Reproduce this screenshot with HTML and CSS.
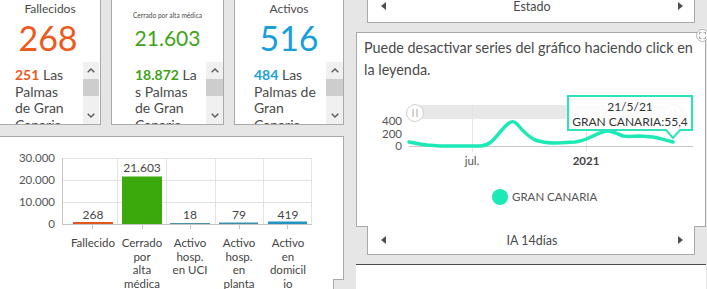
FILE: index.html
```html
<!DOCTYPE html>
<html lang="es">
<head>
<meta charset="utf-8">
<title>Panel</title>
<link rel="stylesheet" href="styles.css">
</head>
<body>
<div class="page">
  <div class="left">
    <div class="cards">
      <div class="card c1">
        <div class="card-title">Fallecidos</div>
        <div class="card-value orange">268</div>
        <div class="card-list">
          <div class="list-text"><b class="orange">251</b> Las<br>Palmas<br>de Gran<br>Canaria</div>
          <div class="sb">
            <div class="sb-btn"><svg width="8" height="5" viewBox="0 0 8 5"><polyline points="0.7,4.3 4,1 7.3,4.3" /></svg></div>
            <div class="sb-thumb"></div>
            <div class="sb-track"></div>
            <div class="sb-btn"><svg width="8" height="5" viewBox="0 0 8 5"><polyline points="0.7,0.7 4,4 7.3,0.7" /></svg></div>
          </div>
        </div>
      </div>
      <div class="card c2">
        <div class="card-title tiny">Cerrado por alta médica</div>
        <div class="card-value green small">21.603</div>
        <div class="card-list">
          <div class="list-text"><b class="green">18.872</b> La<br>s Palmas<br>de Gran<br>Canaria</div>
          <div class="sb">
            <div class="sb-btn"><svg width="8" height="5" viewBox="0 0 8 5"><polyline points="0.7,4.3 4,1 7.3,4.3" /></svg></div>
            <div class="sb-thumb"></div>
            <div class="sb-track"></div>
            <div class="sb-btn"><svg width="8" height="5" viewBox="0 0 8 5"><polyline points="0.7,0.7 4,4 7.3,0.7" /></svg></div>
          </div>
        </div>
      </div>
      <div class="card c3">
        <div class="card-title">Activos</div>
        <div class="card-value blue">516</div>
        <div class="card-list">
          <div class="list-text"><b class="blue">484</b> Las<br>Palmas de<br>Gran<br>Canaria</div>
          <div class="sb">
            <div class="sb-btn"><svg width="8" height="5" viewBox="0 0 8 5"><polyline points="0.7,4.3 4,1 7.3,4.3" /></svg></div>
            <div class="sb-thumb"></div>
            <div class="sb-track"></div>
            <div class="sb-btn"><svg width="8" height="5" viewBox="0 0 8 5"><polyline points="0.7,0.7 4,4 7.3,0.7" /></svg></div>
          </div>
        </div>
      </div>
    </div>

    <div class="panel bars-panel">
      <div class="panel-body bars-body">
        <svg class="bar-chart" width="344" height="160" viewBox="0 0 344 160">
          <g class="grid">
            <line x1="62" y1="21.5" x2="312" y2="21.5"/>
            <line x1="62" y1="43.5" x2="312" y2="43.5"/>
            <line x1="62" y1="65.5" x2="312" y2="65.5"/>
            <line x1="117.5" y1="21" x2="117.5" y2="87"/>
            <line x1="166.5" y1="21" x2="166.5" y2="87"/>
            <line x1="215.5" y1="21" x2="215.5" y2="87"/>
            <line x1="263.5" y1="21" x2="263.5" y2="87"/>
            <line x1="311.5" y1="21" x2="311.5" y2="87"/>
          </g>
          <g class="axis">
            <line x1="62.5" y1="21" x2="62.5" y2="87"/>
            <line x1="62" y1="87.5" x2="312" y2="87.5"/>
            <line x1="92.5" y1="88" x2="92.5" y2="92"/>
            <line x1="142.5" y1="88" x2="142.5" y2="92"/>
            <line x1="190.5" y1="88" x2="190.5" y2="92"/>
            <line x1="239.5" y1="88" x2="239.5" y2="92"/>
            <line x1="287.5" y1="88" x2="287.5" y2="92"/>
          </g>
          <g class="ylab">
            <text x="55" y="25">30.000</text>
            <text x="55" y="47">20.000</text>
            <text x="55" y="69">10.000</text>
            <text x="55" y="91">0</text>
          </g>
          <rect x="73" y="85" width="40" height="2" fill="#e0561c"/>
          <rect x="122" y="39.5" width="40" height="47.5" fill="#3ba80c"/>
          <rect x="170" y="86" width="40" height="1" fill="#4f8ea8"/>
          <rect x="219" y="85.5" width="39" height="1.5" fill="#3d8fae"/>
          <rect x="268" y="84.5" width="39" height="2.5" fill="#2493c4"/>
          <g class="vlab">
            <text x="93" y="82">268</text>
            <text x="142" y="35">21.603</text>
            <text x="190" y="82">18</text>
            <text x="239" y="82">79</text>
            <text x="288" y="82">419</text>
          </g>
          <g class="clab">
            <text x="93" y="110">Fallecido</text>
            <text x="142" y="110">Cerrado</text>
            <text x="142" y="123.5">por</text>
            <text x="142" y="137">alta</text>
            <text x="142" y="150.5">médica</text>
            <text x="190" y="110">Activo</text>
            <text x="190" y="123.5">hosp.</text>
            <text x="190" y="137">en UCI</text>
            <text x="239" y="110">Activo</text>
            <text x="239" y="123.5">hosp.</text>
            <text x="239" y="137">en</text>
            <text x="239" y="150.5">planta</text>
            <text x="288" y="110">Activo</text>
            <text x="288" y="123.5">en</text>
            <text x="288" y="137">domicil</text>
            <text x="288" y="150.5">io</text>
          </g>
        </svg>
      </div>
      <div class="panel-foot">
        <div class="nav bars-nav"></div>
        <div class="corner right-corner"></div>
      </div>
    </div>
  </div>

  <div class="right">
    <div class="nav top-nav">
      <span class="arrow arrow-left"></span>
      <span class="nav-label">Estado</span>
      <span class="arrow arrow-right"></span>
    </div>

    <div class="panel series-panel">
      <div class="panel-body series-body">
        <p class="hint">Puede desactivar series del gráfico haciendo click en la leyenda.</p>
        <svg class="line-chart" width="348" height="140" viewBox="0 0 348 140">
          <rect x="56" y="20" width="272" height="14" fill="#e8e8e8"/>
          <g class="grid">
            <line x1="115.5" y1="20" x2="115.5" y2="67"/>
            <line x1="229.5" y1="20" x2="229.5" y2="67"/>
          </g>
          <line x1="52" y1="61.5" x2="336" y2="61.5" stroke="#c8c8c8"/>
          <g class="ylab">
            <text x="45" y="40">400</text>
            <text x="45" y="53">200</text>
            <text x="45" y="65">0</text>
          </g>
          <text class="xlab" x="115" y="80">jul.</text>
          <text class="xlab bold" x="229" y="80">2021</text>
          <g class="handle">
            <circle cx="58" cy="28" r="8.5"/>
            <line x1="56" y1="24" x2="56" y2="32"/>
            <line x1="60" y1="24" x2="60" y2="32"/>
          </g>
          <g class="handle">
            <circle cx="316" cy="28" r="8.5"/>
            <line x1="314" y1="24" x2="314" y2="32"/>
            <line x1="318" y1="24" x2="318" y2="32"/>
          </g>
          <path class="series" d="M52,57 C58,58 62,59 70,60 L83,61 L123,61 C128,61 130,60 134,57 C140,52 146,42 152,38 C155,36 157,36 160,39 C165,45 170,51 178,55 C186,58 192,58 200,58 L218,57 C226,56 230,54 236,51 C242,48 246,46 251,46 C256,46 260,49 266,51 C272,52 276,51 283,51 L296,52 C302,53 308,55 316,57"/>
          <g class="tip">
            <path d="M211,11 H335 V45 H323 L316,53 L309,45 H211 Z"/>
            <text x="273" y="26">21/5/21</text>
            <text x="273" y="41">GRAN CANARIA:55,4</text>
          </g>
          <circle cx="143" cy="112" r="8" fill="#1de9b6"/>
          <text class="legend" x="155" y="116">GRAN CANARIA</text>
        </svg>
        <span class="expand">
          <svg width="13" height="13" viewBox="0 0 13 13">
            <circle cx="6.5" cy="6.5" r="6" fill="#fff" stroke="#b3b3b3"/>
            <path d="M3.5,5.5 V3.5 H5.5 M7.5,3.5 H9.5 V5.5 M9.5,7.5 V9.5 H7.5 M5.5,9.5 H3.5 V7.5" fill="none" stroke="#9a9a9a" stroke-width="0.9"/>
          </svg>
        </span>
      </div>
      <div class="panel-foot">
        <div class="corner"></div>
        <div class="nav bottom-nav">
          <span class="arrow arrow-left"></span>
          <span class="nav-label">IA 14días</span>
          <span class="arrow arrow-right"></span>
        </div>
        <div class="corner"></div>
      </div>
    </div>

    <div class="panel next-panel"></div>
  </div>
</div>
</body>
</html>
```

FILE: styles.css
```css
* { box-sizing: border-box; }

html, body {
  margin: 0;
  padding: 0;
}

body {
  background: #e6e6e6;
  overflow: hidden;
  width: 707px;
  height: 289px;
  font-family: "Lato", "Open Sans", sans-serif;
  color: #4a4a4a;
}

.page {
  display: flex;
  gap: 12px;
  margin-left: -1px;
  width: 708px;
}

/* ---------- left column ---------- */
.left {
  width: 345px;
  flex: none;
  display: flex;
  flex-direction: column;
  gap: 11px;
}

.cards {
  display: flex;
  gap: 10px;
  margin-top: -10px;
}

.card {
  background: #fff;
  border: 1px solid #a9a9a9;
  height: 135px;
  display: flex;
  flex-direction: column;
}

.c1 { width: 102px; }
.c2 { width: 113px; }
.c3 { width: 110px; }

.card-title {
  margin-top: 11px;
  height: 14px;
  line-height: 14px;
  text-align: center;
  font-size: 12px;
  color: #4a4a4a;
}

.card-title.tiny {
  font-size: 6.6px;
  line-height: 14px;
  padding-top: 6px;
}

.card-value {
  margin-top: 2px;
  height: 40px;
  line-height: 40px;
  text-align: center;
  font-size: 34px;
}

.card-value.small {
  font-size: 21px;
}

.c1 .card-value { padding-right: 4px; }

.orange { color: #ec5a1c; }
.green { color: #41a319; }
.blue { color: #1b9fd9; }

.card-list {
  margin-top: 4px;
  flex: 1;
  display: flex;
  overflow: hidden;
}

.list-text {
  flex: 1;
  font-size: 14px;
  line-height: 16.7px;
  padding-top: 5px;
  color: #4a4a4a;
  overflow: hidden;
  white-space: nowrap;
}

.list-text b { font-weight: 700; }

.c1 .list-text { padding-left: 15px; }
.c2 .list-text { padding-left: 23px; }
.c3 .list-text { padding-left: 19px; }

.sb {
  width: 17px;
  flex: none;
  background: #f0f0f0;
  display: flex;
  flex-direction: column;
}

.c1 .sb { margin-right: 1px; width: 16px; }

.sb-btn {
  height: 17px;
  display: flex;
  align-items: center;
  justify-content: center;
}

.sb-btn svg polyline {
  fill: none;
  stroke: #5a5a5a;
  stroke-width: 1.4;
}

.sb-thumb {
  height: 17px;
  background: #cdcdcd;
}

.sb-track { flex: 1; }

/* ---------- panels ---------- */
.panel {
  display: flex;
  flex-direction: column;
}

.panel-body {
  background: #fff;
  border: 1px solid #a9a9a9;
  border-bottom: none;
  position: relative;
}

.panel-foot {
  display: flex;
}

.corner {
  width: 11px;
  flex: none;
  border-top: 1px solid #a9a9a9;
}

.nav {
  flex: 1;
  background: #fff;
  border: 1px solid #a9a9a9;
  border-top: none;
  display: flex;
  align-items: center;
  justify-content: space-between;
  padding: 0 11px 0 13px;
  font-size: 12.5px;
  color: #4a4a4a;
}

.arrow {
  width: 0;
  height: 0;
  border-top: 4.5px solid transparent;
  border-bottom: 4.5px solid transparent;
}

.arrow-left { border-right: 5px solid #4f4f4f; }
.arrow-right { border-left: 5px solid #4f4f4f; }

.nav-label { flex: 1; text-align: center; }

/* bar chart panel */
.bars-body {
  height: 143px;
}

.bar-chart {
  display: block;
  position: relative;
  z-index: 1;
  overflow: visible;
}

.bars-nav {
  height: 20px;
  border-bottom: none;
}

.right-corner {
  width: 10px;
}

/* svg shared */
.grid line { stroke: #e3e3e3; stroke-width: 1; }
.axis line { stroke: #c4c4c4; stroke-width: 1; }

.ylab text {
  font-family: "Lato", sans-serif;
  font-size: 11.5px;
  fill: #555;
  text-anchor: end;
}

.vlab text {
  font-family: "Lato", sans-serif;
  font-size: 12px;
  fill: #444;
  text-anchor: middle;
}

.clab text {
  font-family: "Lato", sans-serif;
  font-size: 11.5px;
  fill: #444;
  text-anchor: middle;
}

/* ---------- right column ---------- */
.right {
  width: 350px;
  flex: none;
  display: flex;
  flex-direction: column;
}

.top-nav {
  flex: none;
  margin: -10px 11px 0;
  height: 33px;
  padding-top: 10px;
  align-items: flex-start;
}

.top-nav .arrow { margin-top: 1.5px; }
.top-nav .nav-label { line-height: 14px; }

.series-panel {
  margin-top: 9px;
}

.series-body {
  height: 194px;
}

.hint {
  margin: 0;
  padding: 4px 7px 0;
  font-size: 14.4px;
  line-height: 22px;
  color: #4a4a4a;
}

.line-chart {
  display: block;
  margin-top: 4px;
}

.line-chart .xlab {
  font-family: "Lato", sans-serif;
  font-size: 11.5px;
  fill: #555;
  text-anchor: middle;
}

.line-chart .bold { font-weight: 700; fill: #444; }

.handle circle { fill: #fff; stroke: #d0d0d0; stroke-width: 1; }
.handle line { stroke: #a8a8a8; stroke-width: 1; }

.series {
  fill: none;
  stroke: #1de9b6;
  stroke-width: 3.5;
  stroke-linecap: round;
  stroke-linejoin: round;
}

.tip path {
  fill: rgba(255, 255, 255, 0.85);
  stroke: #2de3bd;
  stroke-width: 2;
}

.tip text {
  font-family: "Lato", sans-serif;
  font-size: 12px;
  fill: #333;
  text-anchor: middle;
}

.legend {
  font-family: "Lato", sans-serif;
  font-size: 11.5px;
  fill: #555;
}

.expand {
  position: absolute;
  top: -4px;
  right: -4px;
  width: 13px;
  height: 13px;
  display: block;
}

.expand svg { display: block; }

.bottom-nav {
  height: 29px;
}

.next-panel {
  margin-top: 9px;
  flex: 1;
  min-height: 40px;
  background: #fff;
  border-top: 1px solid #4d4d4d;
}
```
